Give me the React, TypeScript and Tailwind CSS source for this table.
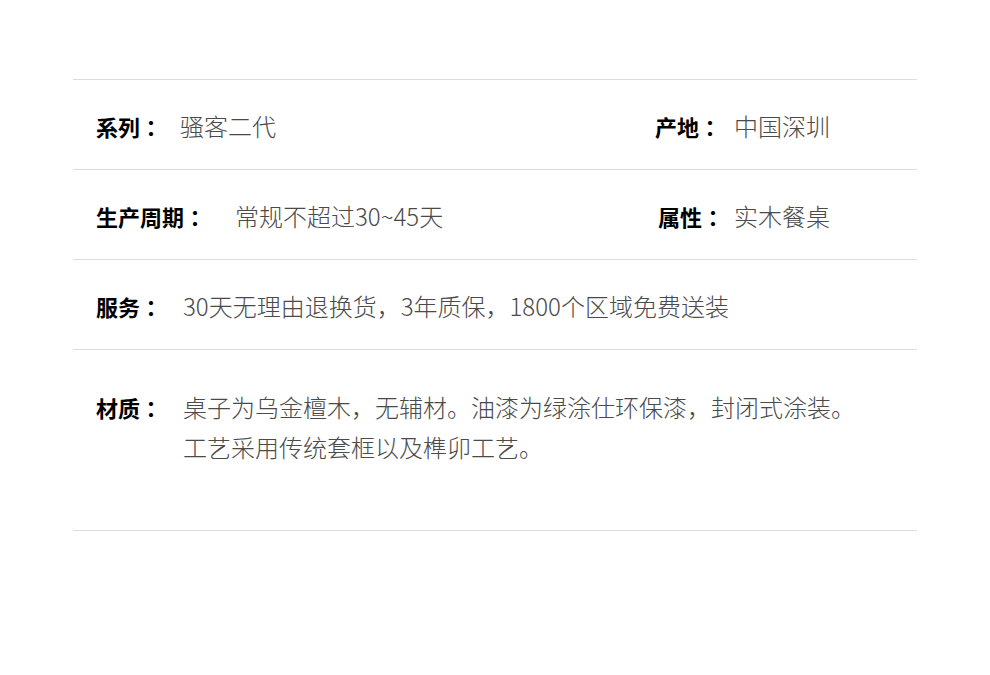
const cjk = "font-['Noto_Sans_CJK_SC',sans-serif]";

type Cell = { label: string; value: string; labelW: string };

// JP face centres the full-width colon, as the reference does
const Label = ({ text, w }: { text: string; w: string }) => (
  <span className={`${w} shrink-0 font-['Noto_Sans_CJK_JP',sans-serif] text-[22px] font-bold text-black`}>{text}</span>
);

const Value = ({ text }: { text: string }) => (
  <span className="text-[24px] font-light text-[#4a4a4a]">{text}</span>
);

const Pair = ({ cell }: { cell: Cell }) => (
  <div className="flex items-center">
    <Label text={cell.label} w={cell.labelW} />
    <Value text={cell.value} />
  </div>
);

const rows: [Cell, Cell][] = [
  [
    { label: "系列：", value: "骚客二代", labelW: "w-[84px]" },
    { label: "产地：", value: "中国深圳", labelW: "w-[79px]" },
  ],
  [
    { label: "生产周期：", value: "常规不超过30~45天", labelW: "w-[139px]" },
    { label: "属性：", value: "实木餐桌", labelW: "w-[76px]" },
  ],
];

export default function App() {
  return (
    <div className={`min-h-[675px] bg-white pt-[79px] ${cjk}`}>
      <div className="mx-auto w-[844px] leading-[40px]">
        {rows.map(([left, right], i) => (
          <div key={i} className="flex h-[90px] items-center border-t border-[#dcdcdc] pt-[2px] pl-[23px]">
            <div className="w-[559px]">
              <Pair cell={left} />
            </div>
            <div className={i === 1 ? "pl-[3px]" : ""}>
              <Pair cell={right} />
            </div>
          </div>
        ))}

        <div className="flex h-[90px] items-center border-t border-[#dcdcdc] pt-[2px] pl-[23px]">
          <Pair cell={{ label: "服务：", value: "30天无理由退换货，3年质保，1800个区域免费送装", labelW: "w-[87px]" }} />
        </div>

        <div className="flex h-[182px] items-start border-y border-[#dcdcdc] pt-[37px] pl-[23px]">
          <Label text="材质：" w="w-[87px]" />
          <div className="flex flex-col">
            <Value text="桌子为乌金檀木，无辅材。油漆为绿涂仕环保漆，封闭式涂装。" />
            <Value text="工艺采用传统套框以及榫卯工艺。" />
          </div>
        </div>
      </div>
    </div>
  );
}
